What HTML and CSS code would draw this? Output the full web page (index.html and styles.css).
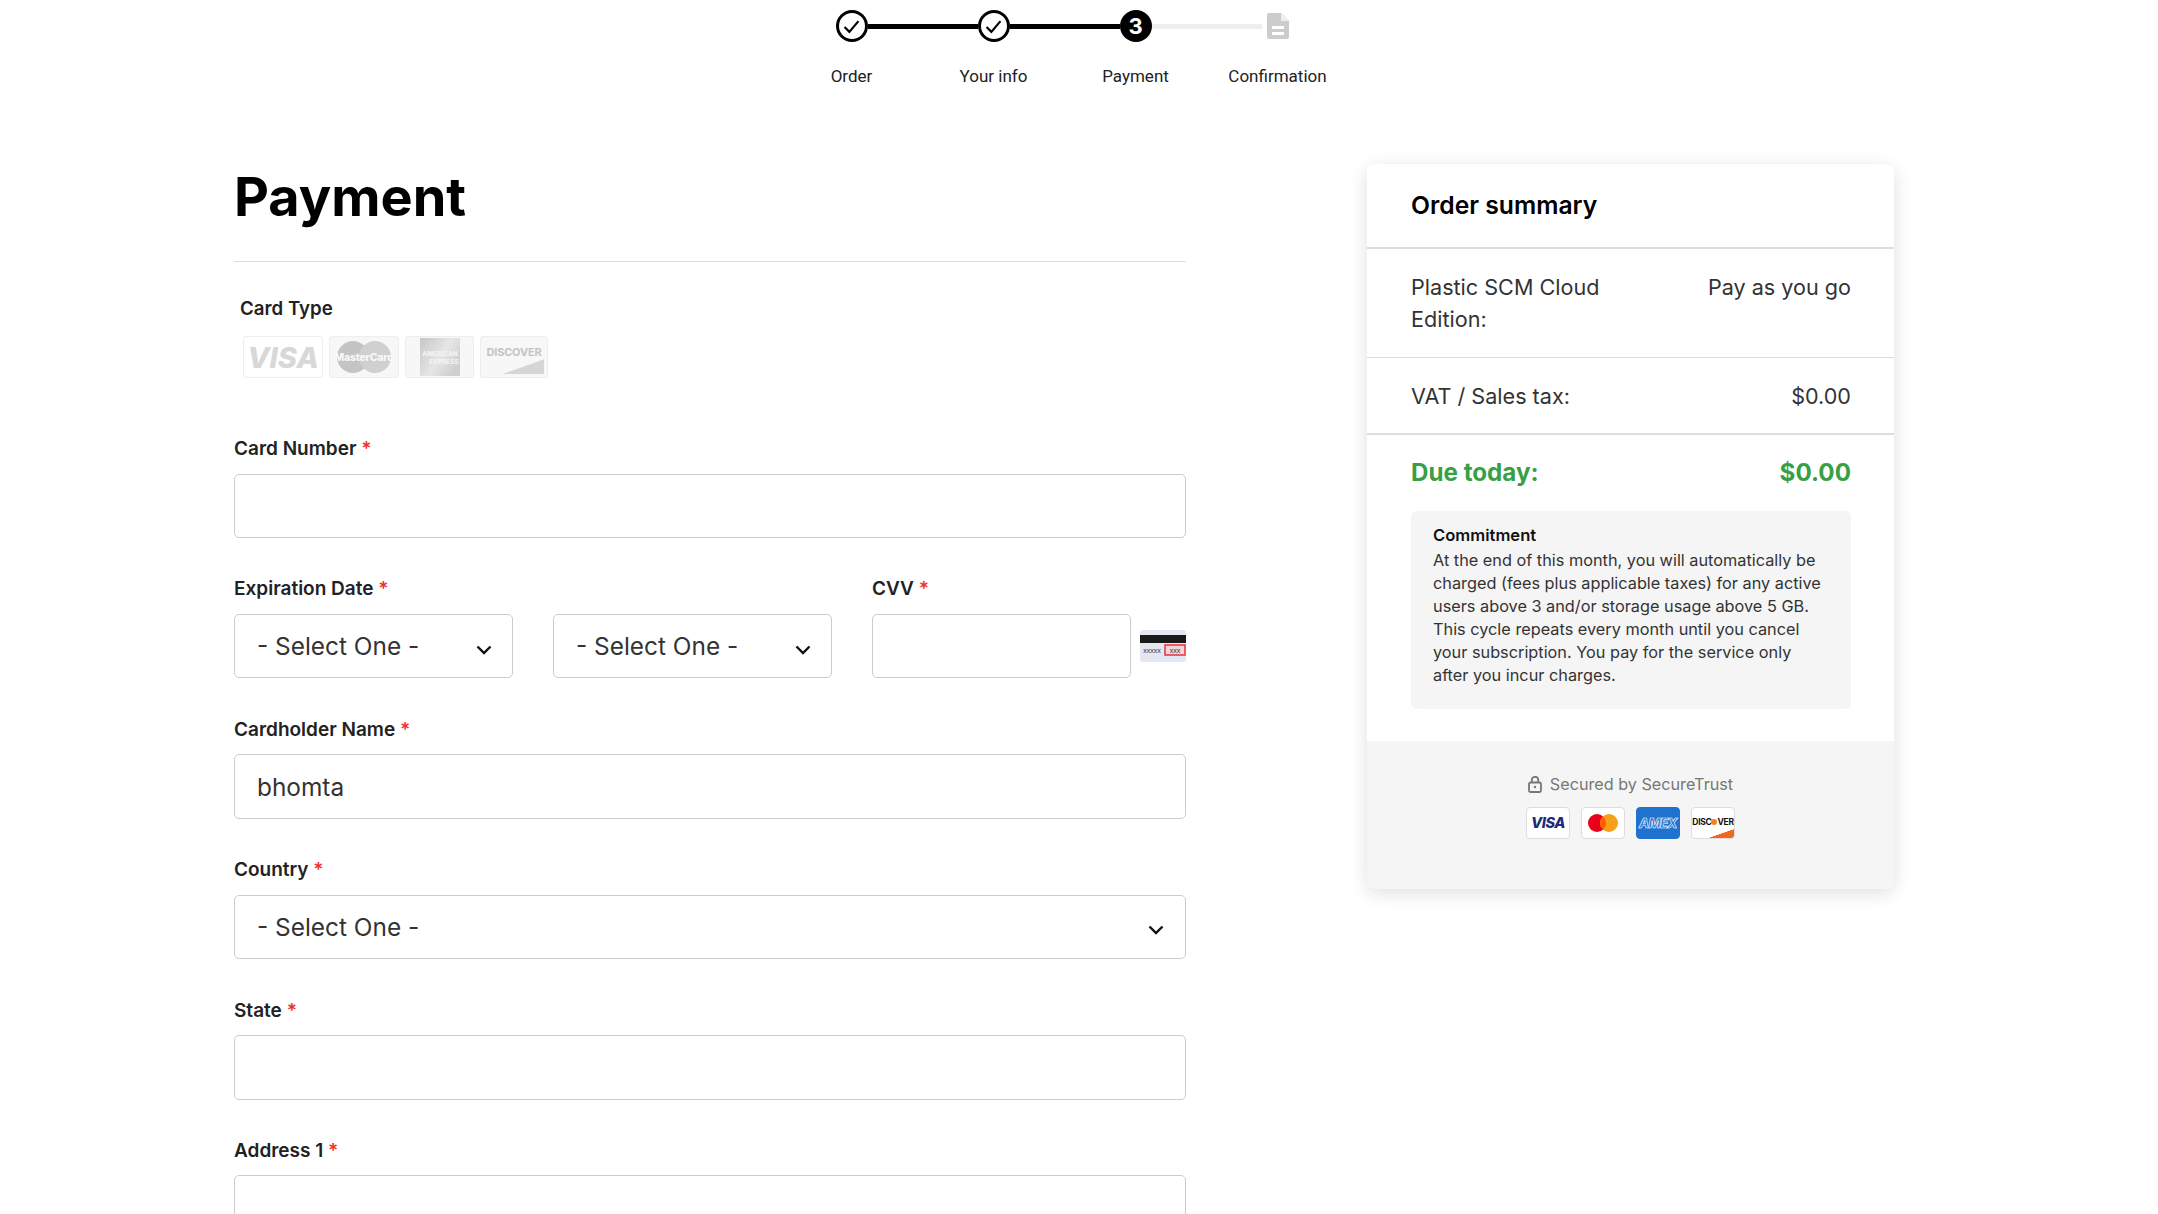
FILE: index.html
```html
<!DOCTYPE html>
<html>
<head>
  <title>Payment</title>
  <link rel="stylesheet" href="styles.css">
</head>
<body>

<div class="page">

  <div class="stepper">
    <div class="track">
      <span class="step-icon done">
        <svg width="17" height="15" viewBox="0 0 15 14"><path d="M1 7.5L5.5 12 14 2" fill="none" stroke="#000" stroke-width="2"/></svg>
      </span>
      <span class="line line-done"></span>
      <span class="step-icon done">
        <svg width="17" height="15" viewBox="0 0 15 14"><path d="M1 7.5L5.5 12 14 2" fill="none" stroke="#000" stroke-width="2"/></svg>
      </span>
      <span class="line line-done"></span>
      <span class="step-icon current">3</span>
      <span class="line"></span>
      <span class="step-icon todo">
        <svg width="22" height="26" viewBox="0 0 22 26"><path d="M2 0h12l8 8v16a2 2 0 0 1-2 2H2a2 2 0 0 1-2-2V2a2 2 0 0 1 2-2z" fill="#ccc"/><path d="M14 0l8 8h-8z" fill="#eee"/><rect x="5" y="13" width="12" height="3" fill="#fff"/><rect x="5" y="19" width="12" height="3" fill="#fff"/></svg>
      </span>
    </div>
    <div class="step-labels">
      <span>Order</span>
      <span>Your info</span>
      <span>Payment</span>
      <span>Confirmation</span>
    </div>
  </div>

  <div class="main">

    <div class="form-col">
      <h1 class="page-title">Payment</h1>

      <div class="card-type">
        <div class="card-type-label">Card Type</div>
        <div class="card-logos">
          <span class="logo-faded logo-visa">VISA</span>
          <span class="logo-faded logo-mc">
            <svg width="58" height="34" viewBox="0 0 58 34">
              <circle cx="18" cy="17" r="16" fill="#c4c4c4"/>
              <circle cx="40" cy="17" r="16" fill="#d0d0d0"/>
              <text x="29" y="21" text-anchor="middle" class="mc-text">MasterCard</text>
            </svg>
          </span>
          <span class="logo-faded logo-amex">
            <svg width="40" height="38" viewBox="0 0 40 38">
              <defs>
                <linearGradient id="amexFade" x1="0" y1="0" x2="1" y2="0.6">
                  <stop offset="0" stop-color="#c6c6c6"/>
                  <stop offset="0.6" stop-color="#e6e6e6"/>
                  <stop offset="1" stop-color="#cfcfcf"/>
                </linearGradient>
              </defs>
              <rect width="40" height="38" fill="url(#amexFade)"/>
              <text x="20" y="18" text-anchor="middle" class="amex-text">AMERICAN</text>
              <text x="24" y="26" text-anchor="middle" class="amex-text">EXPRESS</text>
            </svg>
          </span>
          <span class="logo-faded logo-discover">
            <span class="discover-word">DISCOVER</span>
            <span class="discover-swoosh"></span>
          </span>
        </div>
      </div>

      <div class="field">
        <label class="field-label">Card Number <em>*</em></label>
        <div class="input"></div>
      </div>

      <div class="field-row">
        <div class="field">
          <label class="field-label">Expiration Date <em>*</em></label>
          <div class="date-selects">
            <div class="input select">
              <span>- Select One -</span>
              <svg class="chevron" width="16" height="10" viewBox="0 0 16 10"><path d="M1.5 1.5L8 8l6.5-6.5" fill="none" stroke="#111" stroke-width="2.4"/></svg>
            </div>
            <div class="input select">
              <span>- Select One -</span>
              <svg class="chevron" width="16" height="10" viewBox="0 0 16 10"><path d="M1.5 1.5L8 8l6.5-6.5" fill="none" stroke="#111" stroke-width="2.4"/></svg>
            </div>
          </div>
        </div>
        <div class="field field-cvv">
          <label class="field-label">CVV <em>*</em></label>
          <div class="cvv-wrap">
            <div class="input"></div>
            <svg width="46" height="32" viewBox="0 0 46 32">
              <rect width="46" height="32" rx="3" fill="#e4e6f2"/>
              <rect y="5" width="46" height="8" fill="#1a1a1a"/>
              <text x="12" y="23" text-anchor="middle" class="cvv-text">xxxxx</text>
              <rect x="25" y="15" width="20" height="10" fill="#f4d4d8" stroke="#e5333f" stroke-width="1.5"/>
              <text x="35" y="23" text-anchor="middle" class="cvv-text">xxx</text>
            </svg>
          </div>
        </div>
      </div>

      <div class="field">
        <label class="field-label">Cardholder Name <em>*</em></label>
        <div class="input">bhomta</div>
      </div>

      <div class="field">
        <label class="field-label">Country <em>*</em></label>
        <div class="input select select-wide">
          <span>- Select One -</span>
          <svg class="chevron" width="16" height="10" viewBox="0 0 16 10"><path d="M1.5 1.5L8 8l6.5-6.5" fill="none" stroke="#111" stroke-width="2.4"/></svg>
        </div>
      </div>

      <div class="field">
        <label class="field-label">State <em>*</em></label>
        <div class="input"></div>
      </div>

      <div class="field">
        <label class="field-label">Address 1 <em>*</em></label>
        <div class="input"></div>
      </div>
    </div>

    <div class="summary">
      <div class="summary-head">Order summary</div>

      <div class="summary-row">
        <span class="plan-name">Plastic SCM Cloud Edition:</span>
        <span>Pay as you go</span>
      </div>
      <div class="summary-row row-tax">
        <span>VAT / Sales tax:</span>
        <span>$0.00</span>
      </div>

      <div class="summary-due">
        <div class="due-line">
          <span>Due today:</span>
          <span>$0.00</span>
        </div>
        <div class="commitment">
          <div class="commitment-title">Commitment</div>
          <p>At the end of this month, you will automatically be charged (fees plus applicable taxes) for any active users above 3 and/or storage usage above 5 GB. This cycle repeats every month until you cancel your subscription. You pay for the service only after you incur charges.</p>
        </div>
      </div>

      <div class="summary-foot">
        <div class="secured">
          <svg width="14" height="17" viewBox="0 0 14 17"><rect x="1" y="6.5" width="12" height="9.5" rx="1.5" fill="none" stroke="#777" stroke-width="1.8"/><path d="M3.8 6.5V4a3.2 3.2 0 0 1 6.4 0v2.5" fill="none" stroke="#777" stroke-width="1.8"/><circle cx="7" cy="11" r="1.2" fill="#777"/></svg>
          <span>Secured by SecureTrust</span>
        </div>
        <div class="badges">
          <span class="badge badge-visa">VISA</span>
          <span class="badge">
            <svg width="30" height="18" viewBox="0 0 30 18"><circle cx="9" cy="9" r="9" fill="#eb001b"/><circle cx="21" cy="9" r="9" fill="#f79e1b"/><path d="M15 2.3a9 9 0 0 1 0 13.4a9 9 0 0 1 0-13.4z" fill="#ff5f00"/></svg>
          </span>
          <span class="badge badge-amex">AMEX</span>
          <span class="badge badge-discover">
            <span class="disc-word">DISC<i></i>VER</span>
            <span class="disc-swoosh"></span>
          </span>
        </div>
      </div>
    </div>

  </div>
</div>

</body>
</html>
```

FILE: styles.css
```css
html, body {
  margin: 0;
  background: #fff;
}

.page {
  height: 1214px;
  overflow: hidden;
  font-family: Inter, "Liberation Sans", sans-serif;
  color: #222;
}

/* stepper */
.stepper {
  width: 568px;
  margin-left: 780.5px;
  padding-top: 10px;
}

.track {
  display: flex;
  align-items: center;
  padding: 0 55px;
  height: 32px;
}

.step-icon {
  flex: none;
  width: 32px;
  height: 32px;
  box-sizing: border-box;
  border-radius: 50%;
  display: flex;
  align-items: center;
  justify-content: center;
}

.step-icon.done {
  border: 3px solid #000;
  background: #fff;
}

.step-icon.current {
  background: #000;
  color: #fff;
  font-weight: 700;
  font-size: 22px;
}

.line {
  flex: 1;
  height: 5px;
  background: #eee;
}

.line-done {
  background: #000;
}

.step-labels {
  display: grid;
  grid-template-columns: repeat(4, 142px);
  margin-top: 23px;
  font-family: Roboto, sans-serif;
  font-size: 17px;
  line-height: 23px;
  color: #222;
  text-align: center;
}

/* main columns */
.main {
  display: flex;
  align-items: flex-start;
  padding: 76px 0 0 234px;
}

.form-col {
  width: 952px;
  flex: none;
}

.page-title {
  margin: 0;
  height: 97px;
  line-height: 66px;
  font-size: 54px;
  font-weight: 700;
  color: #000;
  border-bottom: 1px solid #ddd;
}

/* accepted cards */
.card-type {
  padding: 35px 0 0 6px;
  height: 140px;
  box-sizing: border-box;
  margin-bottom: 35px;
}

.card-type-label {
  font-size: 18.7px;
  font-weight: 600;
  line-height: 24px;
  color: #222;
}

.card-logos {
  display: flex;
  gap: 6px;
  margin: 15px 0 0 3px;
}

.logo-faded {
  height: 42px;
  box-sizing: border-box;
  border: 1px solid #eee;
  border-radius: 3px;
  background: #f7f7f7;
  display: flex;
  align-items: center;
  justify-content: center;
  overflow: hidden;
  position: relative;
}

.logo-visa {
  width: 80px;
  background: #fff;
  color: #d8d8d8;
  font-size: 29px;
  font-weight: 800;
  font-style: italic;
  letter-spacing: 0;
}

.logo-mc {
  width: 70px;
}

.mc-text {
  font-family: Inter, sans-serif;
  font-size: 10.5px;
  font-weight: 800;
  letter-spacing: -0.2px;
  fill: #f8f8f8;
}

.logo-amex {
  width: 69px;
}

.amex-text {
  font-family: Inter, sans-serif;
  font-size: 6.5px;
  font-weight: 700;
  fill: #f6f6f6;
}

.logo-discover {
  width: 68px;
  align-items: flex-start;
  justify-content: center;
}

.discover-word {
  margin-top: 8px;
  font-size: 11px;
  font-weight: 700;
  letter-spacing: -0.2px;
  color: #c4c4c4;
}

.discover-swoosh {
  position: absolute;
  right: 3px;
  bottom: 3px;
  width: 42px;
  height: 15px;
  background: linear-gradient(to bottom right, transparent 50%, #d6d6d6 52%);
}

/* form fields */
.field {
  margin-bottom: 39.4px;
}

.field-label {
  display: block;
  font-size: 19px;
  font-weight: 600;
  line-height: 24px;
  margin-bottom: 12.5px;
  color: #222;
}

.field-label em {
  color: #f0302a;
  font-style: normal;
}

.input {
  height: 64.5px;
  box-sizing: border-box;
  border: 1px solid #ccc;
  border-radius: 5px;
  padding: 0 22px;
  display: flex;
  align-items: center;
  background: #fff;
  font-size: 24.4px;
  color: #333;
}

.select {
  justify-content: space-between;
  padding-right: 20px;
}

.select-wide {
  padding-right: 21px;
}

.chevron {
  margin-top: 7px;
}

.field-row {
  display: flex;
  gap: 40px;
}

.date-selects {
  display: flex;
  gap: 40px;
}

.date-selects .select {
  width: 279px;
}

.field-cvv {
  flex: 1;
}

.cvv-wrap {
  display: flex;
  align-items: center;
  gap: 9px;
}

.cvv-wrap .input {
  flex: 1;
}

.cvv-text {
  font-family: "Liberation Sans", sans-serif;
  font-size: 7px;
  fill: #333;
}

/* order summary */
.summary {
  margin-left: 181px;
  width: 527px;
  flex: none;
  border-radius: 8px;
  background: #fff;
  box-shadow: 0 4px 18px rgba(0, 0, 0, 0.13);
  overflow: hidden;
  font-size: 21.6px;
  line-height: 32px;
}

.summary-head {
  height: 85px;
  box-sizing: border-box;
  padding: 25px 44px 0;
  font-size: 24.7px;
  font-weight: 600;
  color: #000;
  border-bottom: 2px solid #ddd;
}

.summary-row {
  display: flex;
  justify-content: space-between;
  padding: 22px 43px 22px 44px;
  border-bottom: 1px solid #ddd;
  color: #333;
}

.row-tax {
  padding-bottom: 21px;
  border-bottom-width: 2px;
}

.plan-name {
  width: 220px;
}

.summary-due {
  padding: 22px 43px 32px 44px;
}

.due-line {
  display: flex;
  justify-content: space-between;
  font-size: 24.2px;
  font-weight: 700;
  color: #38a044;
}

.commitment {
  margin-top: 22px;
  padding: 13px 22px 22px;
  background: #f5f5f5;
  border-radius: 6px;
  font-size: 16.3px;
  line-height: 23px;
  color: #333;
}

.commitment-title {
  font-size: 16.6px;
  font-weight: 600;
  color: #111;
}

.commitment p {
  margin: 2px 0 0;
}

.summary-foot {
  height: 148px;
  box-sizing: border-box;
  padding-top: 33px;
  background: #f5f5f5;
  display: flex;
  flex-direction: column;
  align-items: center;
}

.secured {
  display: flex;
  align-items: center;
  gap: 8px;
  font-size: 16.2px;
  line-height: 20px;
  color: #777;
}

.badges {
  display: flex;
  gap: 11px;
  margin-top: 13px;
}

.badge {
  width: 44px;
  height: 32px;
  box-sizing: border-box;
  border: 1px solid #ddd;
  border-radius: 4px;
  background: #fff;
  display: flex;
  align-items: center;
  justify-content: center;
  overflow: hidden;
  position: relative;
}

.badge-visa {
  color: #1a2a80;
  font-size: 14.5px;
  font-weight: 800;
  font-style: italic;
  letter-spacing: -0.4px;
}

.badge-amex {
  background: #1f72cd;
  border-color: #1f72cd;
  color: #1f72cd;
  -webkit-text-stroke: 0.6px #fff;
  font-size: 13px;
  font-weight: 800;
  font-style: italic;
  letter-spacing: -0.6px;
}

.disc-word {
  font-size: 8.5px;
  font-weight: 700;
  color: #111;
  letter-spacing: -0.3px;
  margin-top: -2px;
  display: flex;
  align-items: center;
}

.disc-word i {
  width: 6px;
  height: 6px;
  border-radius: 50%;
  background: #f58220;
}

.disc-swoosh {
  position: absolute;
  right: 0;
  bottom: 0;
  width: 26px;
  height: 9px;
  background: linear-gradient(to bottom right, transparent 50%, #f4661e 52%);
}
```
